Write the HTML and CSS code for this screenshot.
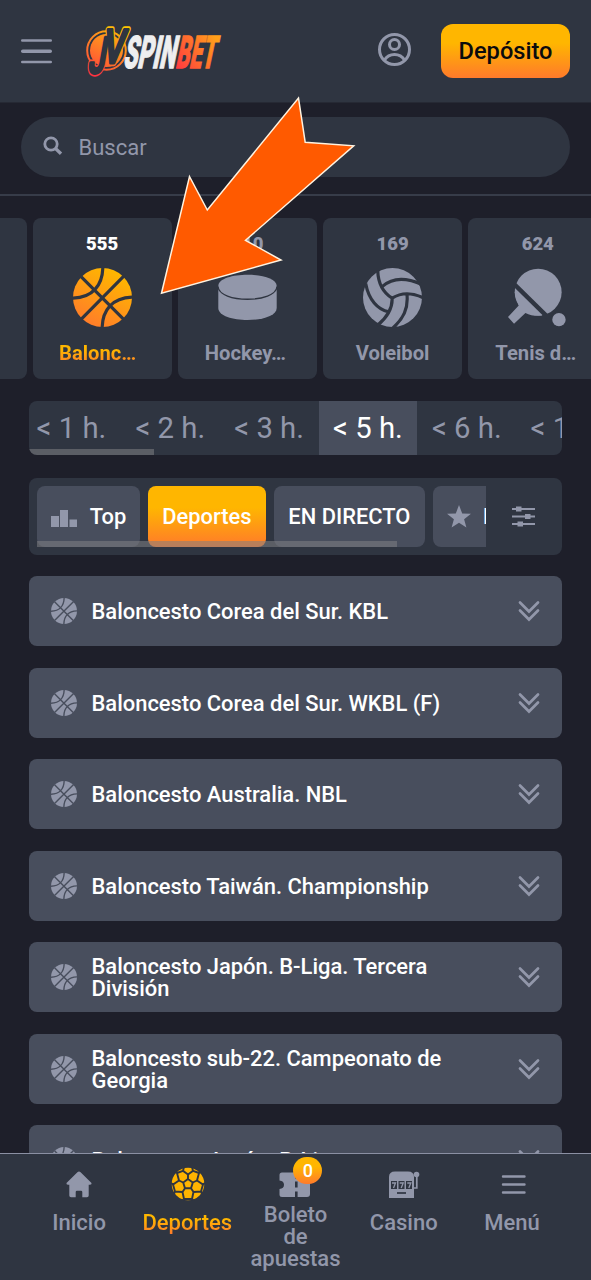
FILE: index.html
```
<!DOCTYPE html>
<html lang="es">
<head>
<meta charset="utf-8">
<title>JVSpinBet</title>
<link rel="stylesheet" href="styles.css">
</head>
<body>
<svg class="defs" width="0" height="0">
  <defs>
    <linearGradient id="gold" x1="0.75" y1="0.1" x2="0.25" y2="1"><stop offset="0" stop-color="#ffb600"/><stop offset="1" stop-color="#ff7a2b"/></linearGradient>
    <linearGradient id="logoRing" gradientUnits="userSpaceOnUse" x1="34" y1="4" x2="8" y2="48"><stop offset="0" stop-color="#ffb400"/><stop offset="0.4" stop-color="#ff8a22"/><stop offset="1" stop-color="#ff4a38"/></linearGradient>
    <linearGradient id="logoJ" gradientUnits="userSpaceOnUse" x1="10" y1="-34" x2="6" y2="4"><stop offset="0" stop-color="#ff8f20"/><stop offset="1" stop-color="#ff2e42"/></linearGradient>
    <linearGradient id="logoV" gradientUnits="userSpaceOnUse" x1="24" y1="-36" x2="14" y2="4"><stop offset="0" stop-color="#ffc800"/><stop offset="1" stop-color="#ff6a2c"/></linearGradient>
    <linearGradient id="logoBet" gradientUnits="userSpaceOnUse" x1="2" y1="0" x2="36" y2="-28"><stop offset="0" stop-color="#ff3a40"/><stop offset="1" stop-color="#ffa01a"/></linearGradient>
    <symbol id="ball" viewBox="0 0 176 176">
      <circle cx="88" cy="88" r="88"/>
      <path class="seam" d="M24 26 152 154M153 23 24 153M89 -2C88 50 60 89 -2 90M87 178C88 126 116 89 178 87"/>
    </symbol>
    <symbol id="chev" viewBox="0 0 22 22"><path d="M2 2.500 11 11.500 20 2.500M2 10.500 11 19.500 20 10.500" fill="none" stroke="#9297aa" stroke-width="2.700" stroke-linecap="round"/></symbol>
  </defs>
</svg>
<div class="app">
  <header class="header">
    <svg class="burger" viewBox="0 0 31 25"><path d="M1.200 1.500H29.800M1.200 23H29.800" stroke-width="2.400"/><path d="M1.800 12.200H29.200" stroke-width="3.600"/></svg>
    <svg class="logo" viewBox="0 0 138 54">
      <circle cx="21.500" cy="26.500" r="19.300" fill="none" stroke="url(#logoRing)" stroke-width="2"/>
      <circle cx="21.500" cy="26.500" r="16.500" fill="url(#logoRing)"/>
      <g class="mono">
        <text stroke="url(#logoJ)" transform="translate(2.500 48.500) skewX(-10) scale(.6 1)" font-size="50">J</text>
        <text stroke="url(#logoV)" transform="translate(16.500 38.500) skewX(-10) scale(.7 1)" font-size="47">V</text>
      </g>
      <g class="mono-in">
        <text transform="translate(2.500 48.500) skewX(-10) scale(.6 1)" font-size="50">J</text>
        <text transform="translate(16.500 38.500) skewX(-10) scale(.7 1)" font-size="47">V</text>
      </g>
      <g class="word">
        <text transform="translate(37.500 43.800) skewX(-12)" textLength="52" lengthAdjust="spacingAndGlyphs" fill="#eeeeef" stroke="#eeeeef">SPIN</text>
        <text transform="translate(90 43.800) skewX(-12)" textLength="39" lengthAdjust="spacingAndGlyphs" fill="url(#logoBet)" stroke="url(#logoBet)">BET</text>
      </g>
    </svg>
    <svg class="user" viewBox="0 0 33 33"><circle cx="16.500" cy="16.500" r="15"/><circle cx="16.500" cy="11.500" r="5"/><path d="M6.500 27C11 19.500 22 19.500 26.500 27"/></svg>
    <button class="deposit">Depósito</button>
  </header>
  <div class="search-wrap">
    <div class="search">
      <svg viewBox="0 0 20 20"><circle cx="8" cy="8" r="6.200"/><path d="M12.500 12.500 18 17.700" stroke-width="3.300"/></svg>
      <span>Buscar</span>
    </div>
  </div>
  <main class="content">
    <div class="sports">
      <div class="sport"></div>
      <div class="sport active"><b>555</b><svg viewBox="0 0 176 176"><use href="#ball" fill="url(#gold)"/></svg><span class="cut-l">Balonc…</span></div>
      <div class="sport"><b>110</b>
        <svg viewBox="0 0 59 59"><path d="M.3 18C.3 3 58.700 3 58.700 18V40C58.700 56 .3 56 .3 40Z"/><path d="M0 18.500C1 35.500 58 35.500 59 18.500" fill="none" stroke="#2f3541" stroke-width="1.300"/></svg>
        <span class="cut-s">Hockey…</span></div>
      <div class="sport"><b>169</b>
        <svg viewBox="0 0 176 176"><circle cx="88" cy="88" r="88"/><path class="seam" d="M44 8C45 40 58 72 87 90M8 46C17 95 44 124 77 131M58 55C90 26 135 30 180 51M87 90C115 72 145 73 178 88M87 90C88 122 72 148 42 172M131 77C136 122 120 152 88 180"/></svg>
        <span>Voleibol</span></div>
      <div class="sport"><b>624</b>
        <svg viewBox="0 0 176 176"><circle cx="90" cy="72" r="70"/><path d="M20 72Q24 95 32 112L0 146 18 166 52 134Q73 145 103 142Z"/><path d="M10 40 120 148" stroke="#2f3541" stroke-width="13" fill="none"/><circle cx="152" cy="154" r="25" fill="#2f3541"/><circle cx="152" cy="154" r="20"/></svg>
        <span class="cut-s">Tenis d…</span></div>
    </div>
    <div class="times">
      <div class="times-row"><span>&lt; 1 h.</span><span>&lt; 2 h.</span><span>&lt; 3 h.</span><span class="on">&lt; 5 h.</span><span>&lt; 6 h.</span><span>&lt; 12 h.</span></div>
      <i class="bar"></i>
    </div>
    <div class="filters">
      <div class="tabs">
        <div class="tab top"><svg viewBox="0 0 26 17"><path d="M0 6H8V17H0ZM9 0H17V17H9ZM18.500 9.500H26V17H18.500Z"/></svg>Top</div>
        <div class="tab on">Deportes</div>
        <div class="tab live">EN DIRECTO</div>
        <div class="tab fav"><svg viewBox="0 0 24 23"><path d="M12 0 15.200 8.400 24 8.700 17.100 14.200 19.400 22.500 12 17.800 4.600 22.500 6.900 14.200 0 8.700 8.800 8.400Z"/></svg><span>Favoritos</span></div>
        <i class="bar"></i>
      </div>
      <svg class="tune" viewBox="0 0 23 21"><path d="M0 3H23M0 10.500H23M0 18H23" stroke="#9297aa" stroke-width="1.900"/><path d="M4 .5H9.500V5.500H4ZM13 8H18.500V13H13ZM5.500 15.500H11V20.500H5.500Z"/></svg>
    </div>
    <div class="leagues">
      <div class="league"><svg class="lb"><use href="#ball"/></svg><span>Baloncesto Corea del Sur. KBL</span><svg class="cv"><use href="#chev"/></svg></div>
      <div class="league"><svg class="lb"><use href="#ball"/></svg><span>Baloncesto Corea del Sur. WKBL (F)</span><svg class="cv"><use href="#chev"/></svg></div>
      <div class="league"><svg class="lb"><use href="#ball"/></svg><span>Baloncesto Australia. NBL</span><svg class="cv"><use href="#chev"/></svg></div>
      <div class="league"><svg class="lb"><use href="#ball"/></svg><span>Baloncesto Taiwán. Championship</span><svg class="cv"><use href="#chev"/></svg></div>
      <div class="league"><svg class="lb"><use href="#ball"/></svg><span>Baloncesto Japón. B-Liga. Tercera División</span><svg class="cv"><use href="#chev"/></svg></div>
      <div class="league"><svg class="lb"><use href="#ball"/></svg><span>Baloncesto sub-22. Campeonato de Georgia</span><svg class="cv"><use href="#chev"/></svg></div>
      <div class="league"><svg class="lb"><use href="#ball"/></svg><span>Baloncesto Japón. B-Liga</span><svg class="cv"><use href="#chev"/></svg></div>
    </div>
  </main>
  <nav class="nav">
    <a><svg viewBox="0 0 34 34"><path d="M17 4.500Q17.800 4.500 18.600 5.300L29.500 16Q30 17.800 28 17.800H26.700V28.500Q26.700 30.200 25 30.200H20.300V25Q20.300 23.800 19 23.800H15Q13.700 23.800 13.700 25V30.200H9Q7.300 30.200 7.300 28.500V17.800H6Q4 17.800 4.500 16L15.400 5.300Q16.200 4.500 17 4.500Z"/></svg><span>Inicio</span></a>
    <a class="on"><svg viewBox="0 0 34 34"><circle cx="17" cy="17" r="16.300"/><path fill="none" stroke="#2f3541" stroke-width="1.900" d="M17 12 21.800 15.500 20 21.200H14L12.200 15.500ZM17 12V7.500M21.800 15.500 26 13.500M20 21.200 22.500 25M14 21.200 11.500 25M12.200 15.500 8 13.500M17 7.500 12 3.800 13 0M17 7.500 22 3.800 21 0M12 3.800 6 6M22 3.800 28 6M26 13.500 28 6M26 13.500 32 17.500 34 16M8 13.500 6 6M8 13.500 2 17.500 0 16M32 17.500 30 24.500M2 17.500 4 24.500M22.500 25 30 24.500 31 27M11.500 25 4 24.500 3 27M22.500 25 21 32M11.500 25 13 32M21 32H13M21 32 23 34M13 32 11 34M28 6 30 4M6 6 4 4"/></svg><span>Deportes</span></a>
    <a class="slip"><svg viewBox="0 0 34 34"><path d="M3 5.500H28.500Q31 5.500 31 8V27Q31 30 28 30H3Q.5 30 .5 27.500V22Q5 21.500 5 17.800T.5 13.500V8Q.5 5.500 3 5.500Z"/><path d="M17.300 6V11.500M17.300 14.500V20.500M17.300 24.500V30" stroke="#2f3541" stroke-width="2.600"/></svg><em class="badge">0</em><span>Boleto de apuestas</span></a>
    <a><svg viewBox="0 0 34 34"><path d="M2 31V10Q2 4.500 8 4.500H21Q27 4.500 27 10V31Z"/><circle cx="29.500" cy="7.500" r="2.800"/><path d="M29.800 9V21H27" fill="none" stroke="#9297aa" stroke-width="1.700"/><path fill="#2f3541" d="M4 14H10V22H4ZM11.500 14H17.500V22H11.500ZM19 14H25V22H19Z"/><path d="M5 16H8.500L6.500 21M12.700 16H16.200L14.200 21M20.300 16H23.800L21.800 21" fill="none" stroke="#9297aa" stroke-width="1.300"/><path d="M10 26H19" stroke="#2f3541" stroke-width="1.700"/></svg><span>Casino</span></a>
    <a><svg viewBox="0 0 34 34"><path d="M8 9.500H29.500M8 17.500H29.500M8 25.500H29.500" stroke="#9297aa" stroke-width="2.400" stroke-linecap="round"/></svg><span>Menú</span></a>
  </nav>
  <svg class="arrow" viewBox="155 92 205 208"><path d="M298.500 98 305.200 142.300 353.700 145.800 245.500 240.300 281 260 161.500 293.300 189.500 176.500 207.300 210Z"/></svg>
</div>
</body>
</html>
```
FILE: styles.css
```
* { box-sizing: border-box; }
body { margin: 0; background: #1e1f2a; font-family: Roboto, sans-serif; color: #9297aa; }
svg { display: block; fill: #9297aa; flex: none; }
.defs { position: absolute; }
.app { position: relative; width: 591px; height: 1280px; overflow: hidden; display: flex; flex-direction: column; }

.header { height: 103px; flex: none; background: #2f3541; border-bottom: 1px solid #262934; display: flex; align-items: center; padding: 0 21px; }
.burger { width: 31px; height: 25px; stroke: #9297aa; stroke-linecap: round; }
.logo { width: 138px; height: 54px; margin-left: 33px; overflow: visible; }
.logo text { font-family: Roboto, sans-serif; font-weight: 900; }
.logo .word text { font-size: 45px; stroke-width: 1.300px; }
.logo .mono text, .logo .mono-in text { font-weight: 500; stroke-linejoin: round; }
.mono text { stroke-width: 6.500px; }
.mono-in text { fill: #2f3541; stroke: #2f3541; stroke-width: 3.200px; }
.user { width: 33px; height: 33px; margin-left: auto; margin-bottom: 4px; fill: none; stroke: #9297aa; stroke-width: 3px; }
.deposit { margin-left: 30px; width: 129px; height: 54px; border: 0; border-radius: 12px; background: linear-gradient(#ffb600 35%, #ff7a2b); font: 500 23.600px Roboto, sans-serif; color: #0b0b0d; padding: 0; }

.search-wrap { flex: none; height: 93px; padding: 14px 21px 0; border-bottom: 2px solid #373c49; }
.search { height: 60px; border-radius: 30px; background: #2f3541; display: flex; align-items: center; padding-left: 22px; gap: 15.500px; font-size: 22px; }
.search svg { width: 20px; height: 20px; fill: none; stroke: #9297aa; stroke-width: 2.800px; margin-bottom: 3px; }

.content { flex: 1; min-height: 0; overflow: hidden; padding-top: 22px; }
.sports { display: flex; gap: 6.200px; margin-left: -112.500px; width: 800px; }
.sport { width: 139px; height: 161px; border-radius: 8px; background: #2f3541; flex: none; display: flex; flex-direction: column; align-items: center; padding-top: 15px; font-weight: 700; font-size: 20.200px; }
.sport b { font-size: 18.500px; line-height: 22px; }
.sport svg { width: 59px; height: 59px; margin: 13px 0 15px; --bg: #2f3541; }
.sport span { line-height: 23px; }
.sport .cut-l { margin-right: 9px; }
.sport .cut-s { margin-right: 4px; }
.sport.active b { color: #fff; }
.sport.active span { background: linear-gradient(#ffb600 35%, #ff7a2b); -webkit-background-clip: text; color: transparent; }
.seam { fill: none; stroke: var(--bg); stroke-width: 9.500px; }

.times { position: relative; width: 533px; height: 54px; margin: 22px 0 0 29px; border-radius: 8px; overflow: hidden; background: #2f3541; }
.times-row { display: flex; margin-left: -7px; width: 700px; }
.times span { width: 98.850px; height: 54px; line-height: 54px; text-align: center; font-size: 29.300px; white-space: nowrap; }
.times span:last-child { width: 115px; }
.times .on { background: #484e5d; color: #fff; }
.bar { position: absolute; left: 0; bottom: 0; height: 6px; background: rgba(128,128,132,.55); }
.times .bar { width: 125px; }

.filters { width: 533px; height: 77px; margin: 23px 0 0 29px; border-radius: 8px; background: #2f3541; display: flex; align-items: center; padding-left: 8px; }
.tabs { position: relative; display: flex; gap: 7.700px; width: 449px; overflow: hidden; }
.tab { flex: none; height: 61px; border-radius: 8px; background: #484e5d; color: #fff; font-weight: 500; font-size: 21.900px; display: flex; align-items: center; justify-content: center; }
.top { width: 103px; gap: 13px; }
.top svg { width: 26px; height: 17px; margin-top: 4px; }
.tab.on { width: 118.500px; background: linear-gradient(#ffb600 35%, #ff7a2b); }
.live { width: 151px; }
.fav { width: 150px; gap: 12.500px; justify-content: flex-start; padding-left: 14px; }
.fav svg { width: 24px; height: 23px; }
.tabs .bar { width: 360px; }
.tune { width: 23px; height: 21px; margin-left: 26px; }

.leagues { margin: 21px 29px 0; display: flex; flex-direction: column; gap: 21.500px; }
.league { height: 70px; flex: none; border-radius: 8px; background: #484e5d; color: #fff; display: flex; align-items: center; padding: 0 22px; font-weight: 500; font-size: 21.930px; line-height: 22px; }
.league span { flex: 1; padding: 2px 60px 0 14.500px; }
.lb { width: 26px; height: 26px; --bg: #484e5d; }
.cv { width: 22px; height: 22px; }

.nav { flex: none; height: 127px; border-top: 1px solid #8b90a3; background: #2f3541; display: flex; padding: 0 25px; }
.nav a { position: relative; flex: 1; min-width: 0; display: flex; flex-direction: column; align-items: center; font-weight: 500; font-size: 22px; line-height: 22px; text-align: center; padding-top: 13px; gap: 11px; }
.nav svg { width: 34px; height: 34px; }
.nav .slip { gap: 3px; }
.nav .slip span { width: 92px; }
.nav .on svg { fill: #ffb400; margin-left: 2px; }
.nav .on span { background: linear-gradient(#ffb600 35%, #ff7a2b); -webkit-background-clip: text; color: transparent; }
.badge { position: absolute; left: 52px; top: 3px; width: 29px; height: 27px; border-radius: 14px; background: linear-gradient(#ffb600 35%, #ff7a2b); color: #fff; font-style: normal; font-size: 18px; line-height: 27px; }
.arrow { position: absolute; left: 155px; top: 92px; width: 205px; height: 208px; z-index: 2; }
.arrow path { fill: #ff5a00; stroke: #fff3e0; stroke-width: 1.500px; }
```
